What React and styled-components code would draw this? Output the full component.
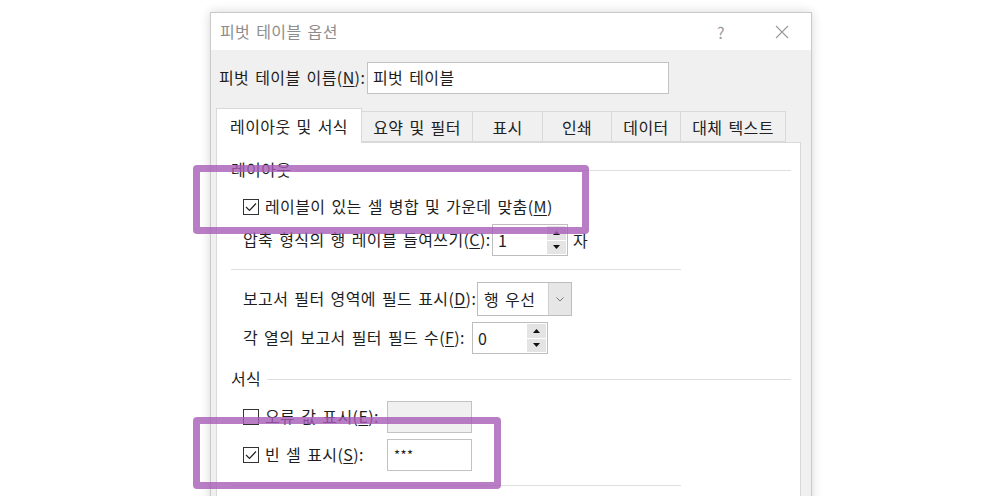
import React from 'react'
import styled, { createGlobalStyle } from 'styled-components'

const GlobalStyle = createGlobalStyle`
  html, body {
    margin: 0;
    padding: 0;
    background: #fff;
    overflow: hidden;
  }
  body {
    font-family: "Noto Sans CJK KR", "Noto Sans", sans-serif;
    color: #1e1e1e;
    letter-spacing: 0.4px;
    word-spacing: 2px;
  }
`

const Page = styled.div`
  position: relative;
  width: 1000px;
  height: 496px;
  overflow: hidden;
  box-sizing: border-box;
  padding: 12px 0 0 210px;
`

const Dialog = styled.div`
  width: 602px;
  height: 520px;
  box-sizing: border-box;
  border: 1px solid #c9c9c9;
  box-shadow: 0 0 10px rgba(0, 0, 0, 0.16);
  background: #f0f0f0;
  display: flex;
  flex-direction: column;
`

const TitleBar = styled.div`
  height: 37px;
  flex-shrink: 0;
  background: #fff;
  display: flex;
  align-items: center;
  padding-left: 9px;
`

const Title = styled.div`
  flex: 1;
  font-size: 16px;
  line-height: 1.2;
  color: #8d8d8d;
`

const TitleButton = styled.div`
  width: 30px;
  height: 30px;
  display: flex;
  align-items: center;
  justify-content: center;
  color: #9a9a9a;
  font-size: 16px;
  margin-right: ${p => p.$mr || 0}px;
`

const Body = styled.div`
  flex: 1;
  display: flex;
  flex-direction: column;
  padding: 12px 10px 0 5px;
`

const NameRow = styled.div`
  display: flex;
  align-items: center;
  height: 32px;
  padding-left: 3px;
`

const Label = styled.span`
  font-size: 16px;
  line-height: 1.2;
  white-space: nowrap;
  width: ${p => (p.$w ? p.$w + 'px' : 'auto')};
  flex-shrink: 0;
  u {
    text-decoration: underline;
    text-underline-offset: 2px;
  }
`

const TextBox = styled.div`
  box-sizing: border-box;
  width: ${p => p.$w}px;
  height: 32px;
  border: 1px solid #c2c2c2;
  background: ${p => (p.$disabled ? '#f0f0f0' : '#fff')};
  display: flex;
  align-items: ${p => (p.$top ? 'flex-start' : 'center')};
  padding: ${p => (p.$top ? '7px 0 0 6px' : '0 0 0 5px')};
  font-size: ${p => p.$fs || 16}px;
  line-height: 1.2;
`

const TabStrip = styled.div`
  margin-top: 14px;
  height: 34px;
  display: flex;
  align-items: flex-end;
  position: relative;
  z-index: 1;
`

const Tab = styled.div`
  box-sizing: border-box;
  width: ${p => p.$w}px;
  height: ${p => (p.$active ? 35 : 31)}px;
  margin-bottom: ${p => (p.$active ? -1 : 0)}px;
  border: 1px solid #d9d9d9;
  border-bottom: ${p => (p.$active ? 'none' : '1px solid #d9d9d9')};
  margin-left: ${p => (p.$first ? 0 : -1)}px;
  background: ${p => (p.$active ? '#fff' : '#f0f0f0')};
  display: flex;
  align-items: center;
  justify-content: center;
  font-size: 16px;
  padding-top: ${p => (p.$active ? 0 : 1)}px;
  color: #222;
`

const Panel = styled.div`
  width: 585px;
  box-sizing: border-box;
  flex: 1;
  background: #fff;
  border: 1px solid #d9d9d9;
  padding: 17px 9px 0 14px;
  display: flex;
  flex-direction: column;
`

const GroupHeader = styled.div`
  height: 20px;
  display: flex;
  align-items: center;
  gap: 6px;
  font-size: 16px;
  line-height: 1.2;
  margin-top: ${p => p.$mt || 0}px;
  &::after {
    content: '';
    flex: 1;
    border-top: 1px solid #dedede;
    margin-top: 1px;
  }
`

const Row = styled.div`
  height: 32px;
  display: flex;
  align-items: center;
  padding-left: 12px;
  margin-top: ${p => p.$mt || 0}px;
`

const Separator = styled.div`
  width: 450px;
  border-top: 1px solid #dedede;
  margin-top: ${p => p.$mt}px;
`

const CheckBox = styled.div`
  box-sizing: border-box;
  width: 16px;
  height: 16px;
  border: 1px solid #333;
  background: #fff;
  margin-right: 6px;
  flex-shrink: 0;
  display: flex;
  align-items: center;
  justify-content: center;
`

const Spinner = styled.div`
  box-sizing: border-box;
  width: 76px;
  height: 32px;
  border: 1px solid #bdbdbd;
  display: flex;
  background: #fff;
`

const SpinValue = styled.div`
  flex: 1;
  display: flex;
  align-items: center;
  padding-left: 5px;
  font-size: 16px;
`

const SpinButtons = styled.div`
  width: 19px;
  display: flex;
  flex-direction: column;
  gap: 1px;
  padding: 1px 1px 1px 0;
`

const SpinButton = styled.div`
  flex: 1;
  background: #e4e4e4;
  display: flex;
  align-items: center;
  justify-content: center;
`

const Unit = styled.span`
  font-size: 16px;
  margin-left: 5px;
`

const Dropdown = styled.div`
  box-sizing: border-box;
  width: 95px;
  height: 34px;
  border: 1px solid #bdbdbd;
  display: flex;
  background: #fff;
`

const DropValue = styled.div`
  flex: 1;
  display: flex;
  align-items: center;
  padding-left: 6px;
  font-size: 16px;
`

const DropButton = styled.div`
  width: 22px;
  background: #e6e6e6;
  border-left: 1px solid #cfcfcf;
  display: flex;
  align-items: center;
  justify-content: center;
`

const Highlight = styled.div`
  position: absolute;
  box-sizing: border-box;
  left: ${p => p.$x}px;
  top: ${p => p.$y}px;
  width: ${p => p.$w}px;
  height: ${p => p.$h}px;
  border: 7px solid rgba(168, 92, 182, 0.8);
  border-radius: 4px;
  pointer-events: none;
`

const Check = () => (
  <svg width="12" height="10" viewBox="0 0 12 10">
    <polyline points="1,5 4.5,8.5 11,1.5" fill="none" stroke="#222" strokeWidth="1.2" />
  </svg>
)

const Arrow = ({ up }) => (
  <svg width="7" height="4" viewBox="0 0 7 4">
    <polygon points={up ? '0,4 7,4 3.5,0' : '0,0 7,0 3.5,4'} fill="#111" />
  </svg>
)

const SpinBox = ({ value }) => (
  <Spinner>
    <SpinValue>{value}</SpinValue>
    <SpinButtons>
      <SpinButton><Arrow up /></SpinButton>
      <SpinButton><Arrow /></SpinButton>
    </SpinButtons>
  </Spinner>
)

const tabs = [
  { name: '레이아웃 및 서식', w: 146 },
  { name: '요약 및 필터', w: 112 },
  { name: '표시', w: 71 },
  { name: '인쇄', w: 70 },
  { name: '데이터', w: 70 },
  { name: '대체 텍스트', w: 106 },
]

const App = () => {
  return (
    <Page>
      <GlobalStyle />
      <Dialog>
        <TitleBar>
          <Title>피벗 테이블 옵션</Title>
          <TitleButton $mr={31}>?</TitleButton>
          <TitleButton $mr={14}>
            <svg width="14" height="14" viewBox="0 0 14 14">
              <path d="M1 1 L13 13 M13 1 L1 13" stroke="#999" strokeWidth="1.1" fill="none" />
            </svg>
          </TitleButton>
        </TitleBar>
        <Body>
          <NameRow>
            <Label $w={148}>피벗 테이블 이름(<u>N</u>):</Label>
            <TextBox $w={302}>피벗 테이블</TextBox>
          </NameRow>
          <TabStrip>
            {tabs.map((t, i) => (
              <Tab key={t.name} $w={t.w} $active={i === 0} $first={i === 0}>{t.name}</Tab>
            ))}
          </TabStrip>
          <Panel>
            <GroupHeader>레이아웃</GroupHeader>
            <Row $mt={11}>
              <CheckBox><Check /></CheckBox>
              <Label>레이블이 있는 셀 병합 및 가운데 맞춤(<u>M</u>)</Label>
            </Row>
            <Row $mt={1}>
              <Label $w={249}>압축 형식의 행 레이블 들여쓰기(<u>C</u>):</Label>
              <SpinBox value="1" />
              <Unit>자</Unit>
            </Row>
            <Separator $mt={13} />
            <Row $mt={13}>
              <Label $w={234}>보고서 필터 영역에 필드 표시(<u>D</u>):</Label>
              <Dropdown>
                <DropValue>행 우선</DropValue>
                <DropButton>
                  <svg width="8" height="5" viewBox="0 0 8 5">
                    <polyline points="0.5,0.5 4,4 7.5,0.5" fill="none" stroke="#777" strokeWidth="1" />
                  </svg>
                </DropButton>
              </Dropdown>
            </Row>
            <Row $mt={7}>
              <Label $w={229}>각 열의 보고서 필터 필드 수(<u>F</u>):</Label>
              <SpinBox value="0" />
            </Row>
            <GroupHeader $mt={15}>서식</GroupHeader>
            <Row $mt={12}>
              <CheckBox />
              <Label $w={122}>오류 값 표시(<u>E</u>):</Label>
              <TextBox $w={85} $disabled />
            </Row>
            <Row $mt={6}>
              <CheckBox><Check /></CheckBox>
              <Label $w={122}>빈 셀 표시(<u>S</u>):</Label>
              <TextBox $w={85} $top $fs={13}>***</TextBox>
            </Row>
            <Separator $mt={14} />
          </Panel>
        </Body>
      </Dialog>
      <Highlight $x={193} $y={165} $w={396} $h={69} />
      <Highlight $x={193} $y={417} $w={308} $h={72} />
    </Page>
  )
}

export default App
